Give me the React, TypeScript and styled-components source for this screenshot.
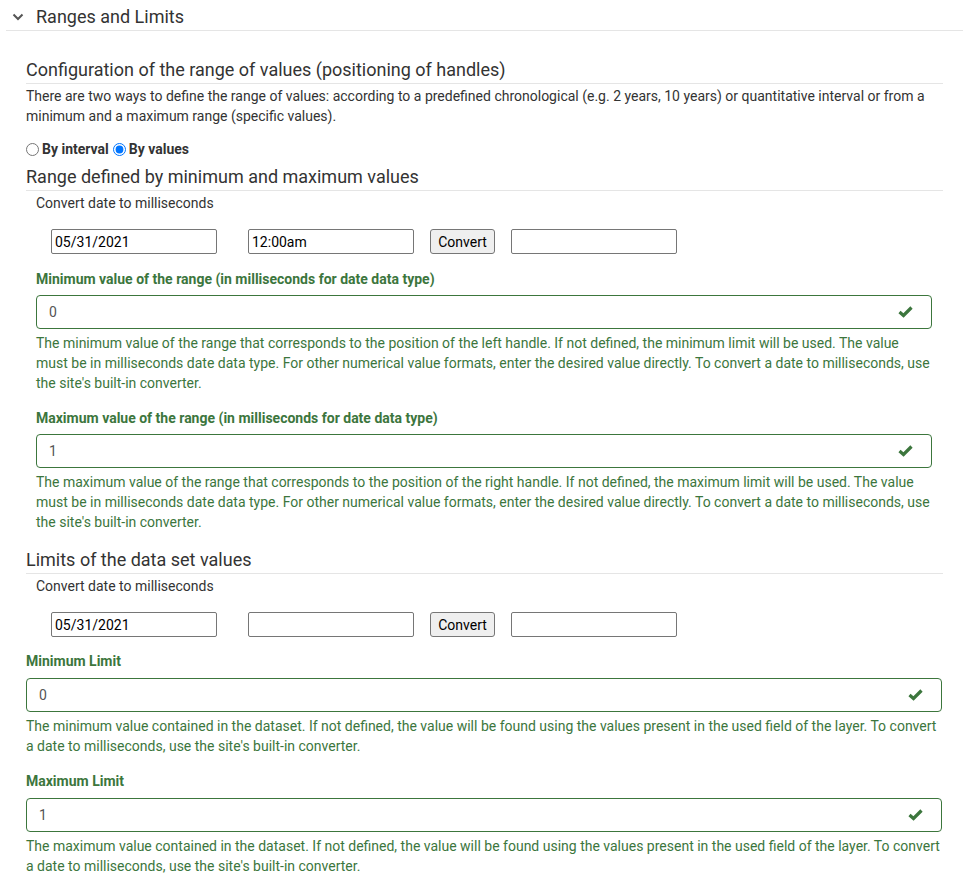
import React from 'react';
import styled, { createGlobalStyle } from 'styled-components';

const GlobalStyle = createGlobalStyle`
  body {
    margin: 0;
    font-family: Roboto, "Liberation Sans", sans-serif;
    font-size: 14px;
    line-height: 20px;
    color: #333;
    background: #fff;
  }
`;

const green = '#3c763d';

const Panel = styled.section`
  padding: 0 6px;
`;

const PanelHeader = styled.div`
  display: flex;
  align-items: center;
  height: 31px;
  box-sizing: border-box;
  padding: 4px 0 0 5px;
  border-bottom: 1px solid #e5e5e5;
`;

const Chevron = styled.svg`
  width: 14px;
  height: 14px;
  margin-right: 11px;
`;

const PanelTitle = styled.span`
  font-size: 18px;
  color: #333;
`;

const PanelBody = styled.div`
  padding: 0 20px;
`;

const SectionTitle = styled.h4<{ $top: number }>`
  margin: ${p => p.$top}px 0 0;
  padding-bottom: 3px;
  border-bottom: 1px solid #e5e5e5;
  font-size: 18px;
  font-weight: 400;
  line-height: 20px;
  color: #333;
`;

const Intro = styled.p`
  margin: 2px 0 13px;
`;

const RadioRow = styled.div`
  display: flex;
  align-items: center;
  font-weight: 700;
  height: 20px;
`;

const Radio = styled.input`
  margin: 0 3px 0 0;
  width: 13px;
  height: 13px;
`;

const RadioLabel = styled.label`
  display: flex;
  align-items: center;
  margin-right: 4px;
`;

const Converter = styled.div`
  padding-left: 10px;
  margin-top: 2px;
`;

const ConverterRow = styled.div`
  display: flex;
  align-items: center;
  margin: 16px 0 0 15px;
`;

const DateInput = styled.input<{ $gap: number }>`
  width: 166px;
  height: 25px;
  box-sizing: border-box;
  padding: 1px 3px;
  margin-right: ${p => p.$gap}px;
  border: 1px solid #767676;
  border-radius: 2px;
  font-family: Roboto, "Liberation Sans", sans-serif;
  font-size: 14px;
  color: #000;
`;

const ConvertButton = styled.button`
  width: 65px;
  height: 25px;
  box-sizing: border-box;
  padding: 1px 0;
  margin-right: 16px;
  border: 1px solid #767676;
  border-radius: 3px;
  background: #efefef;
  font-family: Roboto, "Liberation Sans", sans-serif;
  font-size: 14px;
  color: #000;
`;

const Groups = styled.div<{ $inset: boolean }>`
  padding: ${p => (p.$inset ? '0 11px 0 10px' : '0 1px 0 0')};
`;

const FormGroup = styled.div<{ $top: number }>`
  margin-top: ${p => p.$top}px;
`;

const Label = styled.label<{ $gap: number }>`
  display: block;
  font-weight: 700;
  color: ${green};
  margin-bottom: ${p => p.$gap}px;
`;

const InputWrap = styled.div`
  position: relative;
`;

const TextInput = styled.input`
  display: block;
  width: 100%;
  height: 34px;
  box-sizing: border-box;
  padding: 6px 12px;
  border: 1px solid ${green};
  border-radius: 4px;
  font-family: Roboto, "Liberation Sans", sans-serif;
  font-size: 14px;
  color: #555;
  background: #fff;
`;

const Check = styled.svg`
  position: absolute;
  right: 19px;
  top: 10px;
  width: 15px;
  height: 13px;
`;

const Help = styled.p`
  margin: 4px 0 0;
  color: ${green};
`;

const CheckIcon = () => (
  <Check viewBox="0 0 15 13">
    <path d="M1.5 7 L5.5 10.5 L13.5 2.5" fill="none" stroke={green} strokeWidth="3.2" />
  </Check>
);

type FieldProps = { label: string; value: string; help: string; top: number; gap: number };

const Field = ({ label, value, help, top, gap }: FieldProps) => (
  <FormGroup $top={top}>
    <Label $gap={gap}>{label}</Label>
    <InputWrap>
      <TextInput defaultValue={value} />
      <CheckIcon />
    </InputWrap>
    <Help>{help}</Help>
  </FormGroup>
);

const DateConverter = ({ time }: { time: string }) => (
  <Converter>
    Convert date to milliseconds
    <ConverterRow>
      <DateInput $gap={31} defaultValue="05/31/2021" />
      <DateInput $gap={16} defaultValue={time} />
      <ConvertButton>Convert</ConvertButton>
      <DateInput $gap={0} defaultValue="" />
    </ConverterRow>
  </Converter>
);

export default function App() {
  return (
    <Panel>
      <GlobalStyle />
      <PanelHeader>
        <Chevron viewBox="0 0 14 14">
          <path d="M2.5 4.5 L7 9 L11.5 4.5" fill="none" stroke="#555" strokeWidth="2" />
        </Chevron>
        <PanelTitle>Ranges and Limits</PanelTitle>
      </PanelHeader>
      <PanelBody>
        <SectionTitle $top={29}>Configuration of the range of values (positioning of handles)</SectionTitle>
        <Intro>
          There are two ways to define the range of values: according to a predefined chronological (e.g. 2 years, 10
          years) or quantitative interval or from a minimum and a maximum range (specific values).
        </Intro>
        <RadioRow>
          <RadioLabel>
            <Radio type="radio" name="mode" />
            By interval
          </RadioLabel>
          <RadioLabel>
            <Radio type="radio" name="mode" defaultChecked />
            By values
          </RadioLabel>
        </RadioRow>
        <SectionTitle $top={8}>Range defined by minimum and maximum values</SectionTitle>
        <DateConverter time="12:00am" />
        <Groups $inset>
          <Field
            top={15}
            gap={6}
            label="Minimum value of the range (in milliseconds for date data type)"
            value="0"
            help="The minimum value of the range that corresponds to the position of the left handle. If not defined, the minimum limit will be used. The value must be in milliseconds date data type. For other numerical value formats, enter the desired value directly. To convert a date to milliseconds, use the site's built-in converter."
          />
          <Field
            top={15}
            gap={6}
            label="Maximum value of the range (in milliseconds for date data type)"
            value="1"
            help="The maximum value of the range that corresponds to the position of the right handle. If not defined, the maximum limit will be used. The value must be in milliseconds date data type. For other numerical value formats, enter the desired value directly. To convert a date to milliseconds, use the site's built-in converter."
          />
        </Groups>
        <SectionTitle $top={18}>Limits of the data set values</SectionTitle>
        <DateConverter time="" />
        <Groups $inset={false}>
          <Field
            top={14}
            gap={7}
            label="Minimum Limit"
            value="0"
            help="The minimum value contained in the dataset. If not defined, the value will be found using the values present in the used field of the layer. To convert a date to milliseconds, use the site's built-in converter."
          />
          <Field
            top={15}
            gap={7}
            label="Maximum Limit"
            value="1"
            help="The maximum value contained in the dataset. If not defined, the value will be found using the values present in the used field of the layer. To convert a date to milliseconds, use the site's built-in converter."
          />
        </Groups>
      </PanelBody>
    </Panel>
  );
}
